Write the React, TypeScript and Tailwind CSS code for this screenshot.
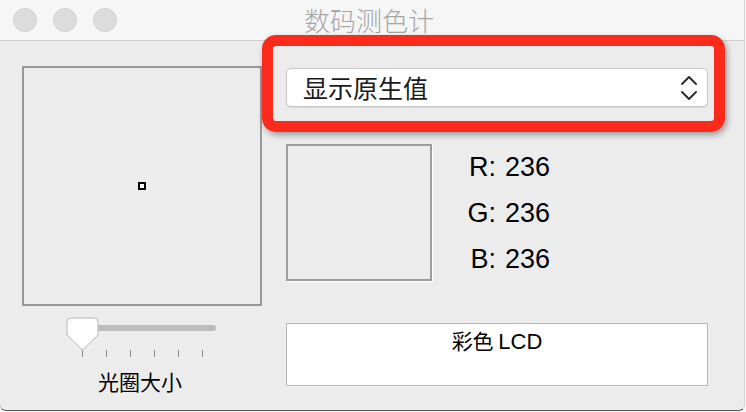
import React from 'react';

const cjk = { fontFamily: '"Noto Sans CJK SC", "Noto Sans", sans-serif' };
const latin = { fontFamily: '"Liberation Sans", Arial, "Noto Sans CJK SC", sans-serif' };

const TrafficLights: React.FC = () => (
  <div className="flex items-center gap-[16px] pl-[13px]">
    <div className="h-[24px] w-[24px] rounded-full bg-[#dcdcdc] border border-[#d2d2d2]" />
    <div className="h-[24px] w-[24px] rounded-full bg-[#dcdcdc] border border-[#d2d2d2]" />
    <div className="h-[24px] w-[24px] rounded-full bg-[#dcdcdc] border border-[#d2d2d2]" />
  </div>
);

const Stepper: React.FC = () => (
  <svg width="18" height="28" viewBox="0 0 18 28" fill="none" stroke="#2e2e2e" strokeWidth="2" strokeLinecap="round" strokeLinejoin="round">
    <path d="M2 10 L9 3 L16 10" />
    <path d="M2 18 L9 25 L16 18" />
  </svg>
);

const ApertureSlider: React.FC = () => (
  <div className="relative ml-[44px] mt-[11px] h-[42px] w-[152px]">
    <div className="absolute left-[16px] top-[8px] h-[6px] w-[134px] rounded-full bg-[#bcbcbc]" />
    <svg className="absolute left-0 top-0" width="33" height="35" viewBox="0 0 33 35">
      <path
        d="M5 1 H28 Q32 1 32 5 V18 L16.5 33 L1 18 V5 Q1 1 5 1 Z"
        fill="#ffffff"
        stroke="#b8b8b8"
        strokeWidth="1"
      />
    </svg>
    <div className="absolute left-[16px] top-[33px] flex gap-[23px]">
      {[0, 1, 2, 3, 4, 5].map((i) => (
        <div key={i} className="h-[7px] w-[1px] bg-[#8a8a8a]" />
      ))}
    </div>
  </div>
);

const RgbRow: React.FC<{ label: string; value: number }> = ({ label, value }) => (
  <div className="flex h-[46px] items-center text-[27px] text-black" style={latin}>
    <span className="w-[36px] text-right">{label}:</span>
    <span className="ml-[9px]">{value}</span>
  </div>
);

export default function App() {
  return (
    <div className="relative h-[412px] w-[746px] overflow-hidden bg-[#f7f7f7]">
      <div className="flex h-[411px] w-[745px] flex-col rounded-b-[6px] border-b border-r border-b-[#5a5a5a] border-r-[#d6d6d6] bg-[#ececec]">
        <div className="grid h-[41px] shrink-0 grid-cols-[1fr_auto_1fr] items-center border-b border-[#d0d0d0] bg-[#f6f6f6]">
          <TrafficLights />
          <div className="pr-[6px] text-[26px] font-light leading-none text-[#a6a6a6]" style={cjk}>
            数码测色计
          </div>
          <div />
        </div>

        <div className="flex">
          <div className="ml-[22px] flex flex-col">
            <div className="mt-[25px] flex h-[240px] w-[240px] items-center justify-center border-2 border-[#999999] bg-[#ececec]">
              <div className="h-[8px] w-[8px] border-2 border-black bg-white" />
            </div>
            <ApertureSlider />
            <div className="mt-[9px] ml-[76px] text-[21px] leading-[26px] text-black" style={cjk}>
              光圈大小
            </div>
          </div>

          <div className="ml-[24px] flex w-[422px] flex-col">
            <div className="mt-[27px] flex h-[39px] items-center justify-between rounded-[5px] border border-[#c6c6c6] bg-white pl-[16px] pr-[9px] shadow-[0_1px_1px_rgba(0,0,0,0.08)]">
              <span className="text-[25px] leading-none text-[#1a1a1a]" style={cjk}>
                显示原生值
              </span>
              <Stepper />
            </div>

            <div className="mt-[36px] flex items-center">
              <div className="h-[137px] w-[146px] border-2 border-[#9c9c9c] bg-[#ececec] shadow-[1px_1px_0_#ffffff]" />
              <div className="ml-[28px] flex flex-col pt-[1px]">
                <RgbRow label="R" value={236} />
                <RgbRow label="G" value={236} />
                <RgbRow label="B" value={236} />
              </div>
            </div>

            <div className="mt-[41px] flex h-[63px] justify-center border border-[#b6b6b6] bg-white pt-[3px] shadow-[0_1px_0_#f4f4f4]">
              <span className="text-[21px] leading-[26px] text-black" style={cjk}>
                彩色 <span className="text-[22px]" style={latin}>LCD</span>
              </span>
            </div>
          </div>
        </div>
      </div>

      <div className="pointer-events-none absolute left-[262px] top-[35px] h-[97px] w-[463px] rounded-[14px] border-[11px] border-[#fb2b1c] shadow-[2px_3px_6px_rgba(0,0,0,0.35)]" />
    </div>
  );
}
